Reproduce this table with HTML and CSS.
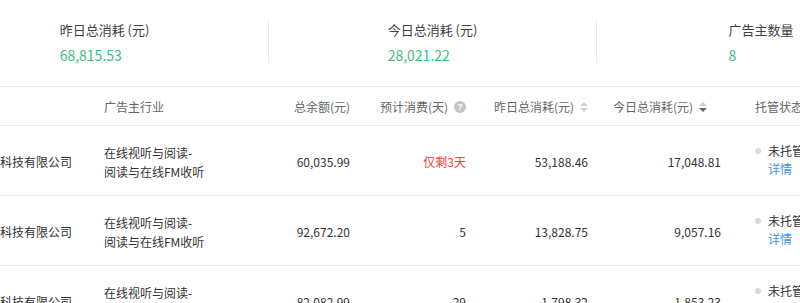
FILE: index.html
```html
<!DOCTYPE html>
<html lang="zh-CN">
<head>
<meta charset="utf-8">
<link rel="stylesheet" href="styles.css">
</head>
<body>
<div class="page">
  <div class="stats">
    <div class="stat">
      <div class="stat-block">
        <div class="stat-label">昨日总消耗 (元)</div>
        <div class="stat-value">68,815.53</div>
      </div>
    </div>
    <div class="stat">
      <div class="stat-block">
        <div class="stat-label">今日总消耗 (元)</div>
        <div class="stat-value">28,021.22</div>
      </div>
    </div>
    <div class="stat stat-last">
      <div class="stat-block">
        <div class="stat-label">广告主数量</div>
        <div class="stat-value">8</div>
      </div>
    </div>
  </div>

  <div class="table">
    <div class="row head">
      <div class="cell"></div>
      <div class="cell">广告主行业</div>
      <div class="cell num">总余额(元)</div>
      <div class="cell num">预计消费(天)<span class="help">?</span></div>
      <div class="cell num">昨日总消耗(元)<span class="sorter"><i class="up"></i><i class="down"></i></span></div>
      <div class="cell num pad-sort">今日总消耗(元)<span class="sorter"><i class="up"></i><i class="down active"></i></span></div>
      <div class="cell status-head">托管状态</div>
    </div>

    <div class="row body">
      <div class="cell company">科技有限公司</div>
      <div class="cell industry">在线视听与阅读-<br>阅读与在线FM收听</div>
      <div class="cell num">60,035.99</div>
      <div class="cell num danger">仅剩3天</div>
      <div class="cell num">53,188.46</div>
      <div class="cell num">17,048.81</div>
      <div class="cell status"><div class="status-line"><span class="dot"></span>未托管</div><a class="link">详情</a></div>
    </div>

    <div class="row body">
      <div class="cell company">科技有限公司</div>
      <div class="cell industry">在线视听与阅读-<br>阅读与在线FM收听</div>
      <div class="cell num">92,672.20</div>
      <div class="cell num">5</div>
      <div class="cell num">13,828.75</div>
      <div class="cell num">9,057.16</div>
      <div class="cell status"><div class="status-line"><span class="dot"></span>未托管</div><a class="link">详情</a></div>
    </div>

    <div class="row body">
      <div class="cell company">科技有限公司</div>
      <div class="cell industry">在线视听与阅读-<br>阅读与在线FM收听</div>
      <div class="cell num">82,082.99</div>
      <div class="cell num">29</div>
      <div class="cell num">1,798.32</div>
      <div class="cell num">1,853.23</div>
      <div class="cell status"><div class="status-line"><span class="dot"></span>未托管</div><a class="link">详情</a></div>
    </div>
  </div>
</div>
</body>
</html>
```

FILE: styles.css
```css
html, body {
  margin: 0;
  padding: 0;
  background: #fff;
}
body {
  font-family: "Noto Sans CJK SC", "Noto Sans", sans-serif;
  color: #333;
  width: 800px;
  height: 303px;
  overflow: hidden;
}
.page {
  width: 800px;
  overflow: hidden;
}

/* stats */
.stats {
  display: flex;
  margin-left: -59px;
  height: 86px;
  border-bottom: 1px solid #e9e9e9;
  box-sizing: content-box;
  width: 859px;
}
.stat {
  flex: 0 0 328px;
  box-sizing: border-box;
  margin-top: 20px;
  height: 43px;
  border-right: 1px solid #e9e9e9;
  display: flex;
  justify-content: center;
}
.stat-last {
  border-right: none;
}
.stat-block {
  text-align: left;
}
.stat-label {
  font-size: 13px;
  line-height: 20px;
  color: #404040;
}
.stat-value {
  margin-top: 4px;
  font-size: 14px;
  line-height: 22px;
  color: #3dbd7d;
}

/* table */
.row {
  display: grid;
  grid-template-columns: 104px 146px 100px 116px 122px 133px 79px;
  border-bottom: 1px solid #e9e9e9;
  font-size: 12px;
}
.row.head {
  height: 37px;
  color: #666;
  align-items: center;
  padding-top: 1px;
  box-sizing: content-box;
}
.row.body {
  height: 67px;
  padding-top: 2px;
  align-items: center;
  color: #333;
}
.cell {
  white-space: nowrap;
  line-height: 19px;
  min-width: 0;
}
.num {
  text-align: right;
  display: flex;
  justify-content: flex-end;
  align-items: center;
}
.pad-sort {
  padding-right: 14px;
}
.industry {
  line-height: 19px;
}
.danger {
  color: #f04134;
}
.status-head {
  padding-left: 34px;
}
.status {
  padding-left: 34px;
  line-height: 18px;
  margin-top: -3px;
}
.status-line {
  display: flex;
  align-items: center;
  width: 60px;
}
.dot {
  flex: 0 0 6px;
  width: 6px;
  height: 6px;
  border-radius: 50%;
  background: #d9d9d9;
  margin-right: 7px;
}
.link {
  display: block;
  color: #3d92e8;
  padding-left: 13px;
}

/* icons */
.help {
  display: inline-flex;
  align-items: center;
  justify-content: center;
  width: 12px;
  height: 12px;
  border-radius: 50%;
  background: #c4c4c4;
  color: #fff;
  font-size: 9px;
  font-weight: bold;
  line-height: 12px;
  margin-left: 6px;
  font-family: "Liberation Sans", sans-serif;
}
.sorter {
  display: inline-flex;
  flex-direction: column;
  justify-content: center;
  margin-left: 6px;
  gap: 2px;
}
.sorter i {
  display: block;
  width: 0;
  height: 0;
  border-left: 4px solid transparent;
  border-right: 4px solid transparent;
}
.sorter .up {
  border-bottom: 4px solid #cfcfcf;
}
.sorter .down {
  border-top: 4px solid #cfcfcf;
}
.sorter .down.active {
  border-top-color: #666;
}
```
